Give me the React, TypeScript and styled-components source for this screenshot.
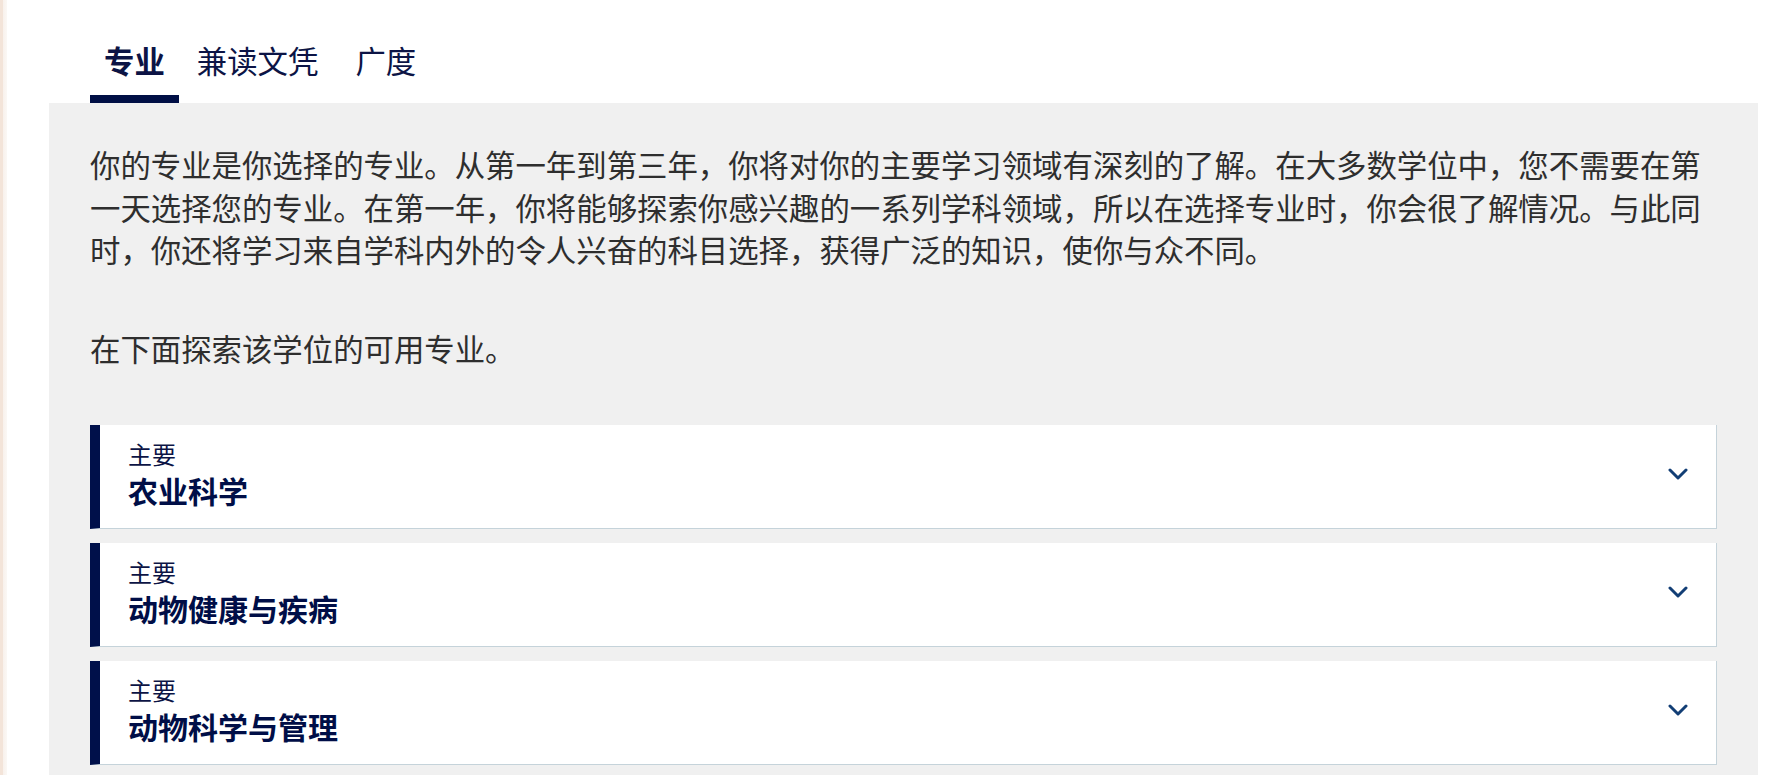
import React, { useState } from "react";
import styled, { createGlobalStyle } from "styled-components";

const GlobalStyle = createGlobalStyle`
  html, body {
    margin: 0;
    padding: 0;
    background: #ffffff;
  }
  body {
    font-family: "Noto Sans CJK SC", "Noto Sans", sans-serif;
  }
`;

const Page = styled.div`
  display: flex;
  min-height: 775px;
`;

const EdgeShade = styled.div`
  width: 7px;
  flex-shrink: 0;
  background: linear-gradient(to right, #f3e4d9 0, #f3e4d9 3px, #f8f1ec 3px, #fbf8f5 7px);
`;

const Main = styled.main`
  flex: 1;
  padding: 0 27px 0 42px;
`;

const TabBar = styled.nav`
  display: flex;
  gap: 4px;
  padding: 40px 0 0 41px;
`;

const Tab = styled.button<{ $active?: boolean }>`
  border: none;
  background: none;
  cursor: pointer;
  padding: 0 14px 15px;
  font-family: "Noto Sans CJK SC", sans-serif;
  font-size: 30.4px;
  line-height: 40px;
  font-weight: ${({ $active }) => ($active ? 700 : 400)};
  color: #0c1445;
  border-bottom: 8px solid ${({ $active }) => ($active ? "#000f45" : "transparent")};

  &:last-child {
    margin-left: 5px;
  }
`;

const Panel = styled.section`
  background: #f0f0f0;
  padding: 40px 41px 20px;
  min-height: 632px;
  box-sizing: border-box;
`;

const Intro = styled.p`
  margin: 0 0 56px;
  font-size: 30.4px;
  line-height: 42.5px;
  color: #2e2e2e;
`;

const CardList = styled.div`
  display: flex;
  flex-direction: column;
  gap: 14px;
`;

const Card = styled.div`
  display: flex;
  align-items: center;
  background: #ffffff;
  border-left: 10px solid #00104a;
  border-right: 1px solid #c5d3da;
  border-bottom: 1px solid #c5d3da;
  padding: 14px 28px 19px 28px;
  cursor: pointer;
`;

const CardText = styled.div`
  flex: 1;
  display: flex;
  flex-direction: column;
`;

const Label = styled.span`
  font-size: 24px;
  line-height: 29px;
  color: #0c1445;
  margin-bottom: 4px;
`;

const Title = styled.span`
  font-size: 30px;
  line-height: 37px;
  font-weight: 700;
  color: #000e47;
`;

const Chevron: React.FC = () => (
  <svg width="20" height="12" viewBox="0 0 20 12" fill="none">
    <polyline
      points="2,2 10,10 18,2"
      stroke="#123e75"
      strokeWidth="3"
      strokeLinecap="round"
      strokeLinejoin="round"
    />
  </svg>
);

const tabs = ["专业", "兼读文凭", "广度"];

const majors = ["农业科学", "动物健康与疾病", "动物科学与管理"];

const App: React.FC = () => {
  const [activeTab, setActiveTab] = useState(0);

  return (
    <>
      <GlobalStyle />
      <Page>
        <EdgeShade />
        <Main>
          <TabBar>
            {tabs.map((tab, i) => (
              <Tab key={tab} $active={i === activeTab} onClick={() => setActiveTab(i)}>
                {tab}
              </Tab>
            ))}
          </TabBar>
          <Panel>
            <Intro>
              你的专业是你选择的专业。从第一年到第三年，你将对你的主要学习领域有深刻的了解。在大多数学位中，您不需要在第一天选择您的专业。在第一年，你将能够探索你感兴趣的一系列学科领域，所以在选择专业时，你会很了解情况。与此同时，你还将学习来自学科内外的令人兴奋的科目选择，获得广泛的知识，使你与众不同。
            </Intro>
            <Intro>在下面探索该学位的可用专业。</Intro>
            <CardList>
              {majors.map((major) => (
                <Card key={major}>
                  <CardText>
                    <Label>主要</Label>
                    <Title>{major}</Title>
                  </CardText>
                  <Chevron />
                </Card>
              ))}
            </CardList>
          </Panel>
        </Main>
      </Page>
    </>
  );
};

export default App;
